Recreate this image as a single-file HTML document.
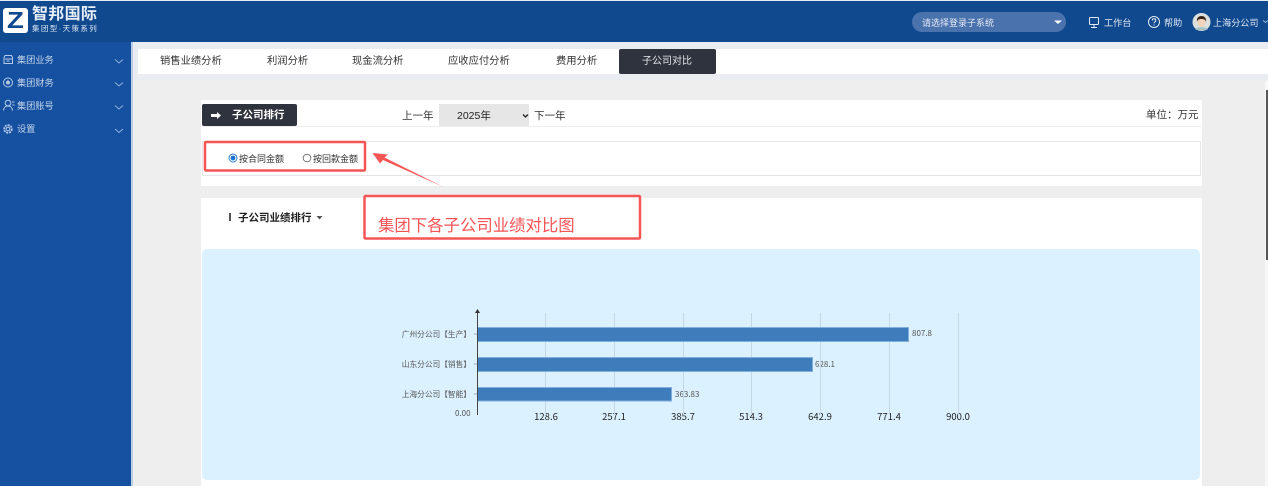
<!DOCTYPE html>
<html lang="zh">
<head>
<meta charset="utf-8">
<title>子公司对比</title>
<style>
html,body{margin:0;padding:0;width:1268px;height:486px;overflow:hidden;background:#eeeeee}
body{position:relative;font-family:"Liberation Sans","Noto Sans CJK SC",sans-serif;color:#333}
div,span{position:absolute;white-space:nowrap}
.t{line-height:14px}
.side{font-size:9.2px;color:#c5d6ec;left:17px;line-height:12px}
.tab{top:55px;font-size:10.3px;line-height:14px;color:#333}
.yl{font-size:7.7px;color:#555;line-height:10px;left:380px;width:91px;text-align:right}
.xl{font-family:"Noto Sans CJK SC",sans-serif;font-size:9.5px;color:#222;line-height:12px;top:410px;width:50px;text-align:center}
.vl{font-family:"Noto Sans CJK SC",sans-serif;font-size:8px;color:#555;line-height:10px}
svg{position:absolute;left:0;top:0}
</style>
</head>
<body>
<!-- top bar -->
<div style="left:0;top:0;width:1268px;height:42px;background:#11498f;border-top:1px solid #e6edf5;box-sizing:border-box"></div>
<!-- sidebar -->
<div style="left:0;top:42px;width:131px;height:444px;background:#1651a1"></div>
<div style="left:131px;top:42px;width:2px;height:444px;background:#b9cde6"></div>
<!-- band -->
<div style="left:133px;top:42px;width:1135px;height:38px;background:#e9ecf0"></div>
<div style="left:138px;top:49px;width:1130px;height:25px;background:#fff"></div>
<!-- logo -->
<div style="left:3px;top:8px;width:25px;height:25px;background:#fff;border-radius:3px"></div>
<div style="left:3px;top:7px;width:25px;height:26px;font:bold 23px/27px 'Liberation Sans',sans-serif;color:#11498f;text-align:center;transform:scaleX(1.2)">Z</div>
<div style="left:32px;top:6px;font-size:16px;font-weight:bold;line-height:18px;color:#e8eef7;letter-spacing:.3px">智邦国际</div>
<div style="left:32px;top:24px;font-size:7.500px;line-height:9px;color:#dbe6f3;letter-spacing:1.4px">集团型·天策系列</div>
<!-- sidebar items -->
<div class="side" style="top:54px">集团业务</div>
<div class="side" style="top:77px">集团财务</div>
<div class="side" style="top:100px">集团账号</div>
<div class="side" style="top:123px">设置</div>
<!-- header right -->
<div style="left:912px;top:12px;width:154px;height:20px;border-radius:10px;background:#4a72ad"></div>
<div class="t" style="left:922px;top:16px;font-size:9px;color:#e4ebf5">请选择登录子系统</div>
<div class="t" style="left:1104px;top:16px;font-size:9.100px;color:#dfe8f3">工作台</div>
<div class="t" style="left:1164px;top:16px;font-size:9.100px;color:#dfe8f3">帮助</div>
<div class="t" style="left:1213px;top:16px;font-size:9.100px;color:#dfe8f3">上海分公司</div>
<!-- tabs -->
<div class="tab" style="left:160px">销售业绩分析</div>
<div class="tab" style="left:267px">利润分析</div>
<div class="tab" style="left:352px">现金流分析</div>
<div class="tab" style="left:448px">应收应付分析</div>
<div class="tab" style="left:556px">费用分析</div>
<div style="left:619px;top:49px;width:97px;height:25px;background:#2f333d;border-radius:2px"></div>
<div class="tab" style="left:642px;color:#e4e6ea;font-size:10px">子公司对比</div>
<!-- panel 1 -->
<div style="left:201px;top:100px;width:1001px;height:86px;background:#fff"></div>
<div style="left:202px;top:126px;width:999px;height:1px;background:#eee"></div>
<div style="left:202px;top:104px;width:95px;height:22px;background:#2f333d;border-radius:2px"></div>
<div class="t" style="left:232px;top:108px;font-size:10.500px;font-weight:bold;color:#fff">子公司排行</div>
<div class="t" style="left:402px;top:109px;font-size:10.500px;color:#333">上一年</div>
<div style="left:439px;top:104px;width:90px;height:22px;background:#e6e6e6"></div>
<div class="t" style="left:457px;top:109px;font-size:10.500px;color:#222">2025年</div>
<div class="t" style="left:534px;top:109px;font-size:10.500px;color:#333">下一年</div>
<div class="t" style="left:1146px;top:108px;font-size:10.500px;color:#333">单位：万元</div>
<div style="left:202px;top:141px;width:999px;height:35px;box-sizing:border-box;border:1px solid #e6e6e6;background:#fff"></div>
<div class="t" style="left:239px;top:152px;font-size:9px;color:#333">按合同金额</div>
<div class="t" style="left:313px;top:152px;font-size:9px;color:#333">按回款金额</div>
<!-- panel 2 -->
<div style="left:201px;top:198px;width:1001px;height:288px;background:#fff"></div>
<div style="left:229px;top:213px;width:2px;height:8px;background:#555"></div>
<div class="t" style="left:238px;top:211px;font-size:10.500px;font-weight:bold;color:#222">子公司业绩排行</div>
<div style="left:202px;top:249px;width:998px;height:231px;background:#dcf1ff;border-radius:5px"></div>
<!-- chart labels -->
<div class="yl" style="top:330px">广州分公司【生产】</div>
<div class="yl" style="top:360px">山东分公司【销售】</div>
<div class="yl" style="top:390px">上海分公司【智能】</div>
<div class="vl" style="left:455px;top:409px">0.00</div>
<div class="vl" style="left:912px;top:329px">807.8</div>
<div class="vl" style="left:815px;top:360px">628.1</div>
<div class="vl" style="left:675px;top:390px">363.83</div>
<div class="xl" style="left:521px">128.6</div>
<div class="xl" style="left:589px">257.1</div>
<div class="xl" style="left:658px">385.7</div>
<div class="xl" style="left:726px">514.3</div>
<div class="xl" style="left:795px">642.9</div>
<div class="xl" style="left:864px">771.4</div>
<div class="xl" style="left:933px">900.0</div>
<!-- scrollbar -->
<div style="left:1265px;top:81px;width:3px;height:405px;background:#f7f7f7"></div>
<div style="left:1266px;top:90px;width:2px;height:170px;background:#555"></div>

<svg width="1268" height="486" viewBox="0 0 1268 486" fill="none">
  <!-- sidebar icons -->
  <g stroke="#b5cae6" stroke-width="1" fill="none">
    <path d="M5 55.500h6.500l1 2v6h-8.500v-6zM5 59h7M6.500 61h3"/>
    <circle cx="8" cy="82.500" r="4.500"/><circle cx="8" cy="82.500" r="1.500" fill="#b5cae6"/>
    <circle cx="8" cy="103" r="2.800"/><path d="M3.500 110.500c.5-3.500 2-4.500 4.500-4.500s4 1 4.500 4.500M12 102h2.500M12.500 105h2"/>
    <circle cx="8" cy="129" r="3.800" stroke-width="1.800" stroke-dasharray="2 .9"/><circle cx="8" cy="129" r="1.800"/>
    <path d="M115 59.500l4 3.500 4-3.500M115 82.500l4 3.500 4-3.500M115 105.500l4 3.500 4-3.500M115 129l4 3.500 4-3.500" stroke="#8fb0da"/>
  </g>
  <!-- header icons -->
  <path d="M1054 20.500h8l-4 3.500z" fill="#fff"/>
  <g stroke="#e4ebf5" stroke-width="1" fill="none">
    <rect x="1089.500" y="17.500" width="9" height="7" rx="1"/><path d="M1094 24.500v3M1091 27.500h6"/>
    <circle cx="1154" cy="22" r="5.500"/><path d="M1152.300 20.500c0-2.300 3.500-2.300 3.500 0 0 1.300-1.800 1.300-1.800 2.800"/>
    <path d="M1263 20.500l2.500 2 2.500-2" stroke="#9db5d6"/>
  </g>
  <circle cx="1154" cy="25" r=".6" fill="#e4ebf5"/>
  <circle cx="1201.500" cy="22" r="9" fill="#dbe0dd"/>
  <ellipse cx="1201.500" cy="22.500" rx="3.700" ry="4.300" fill="#f3d3bb"/>
  <path d="M1197 22c-.5-4 1.500-6 4.500-6s5 2 4.500 6c-.5-2-1.500-3-4.500-3s-4 1-4.500 3z" fill="#3a2418"/>
  <path d="M1195 29c2-2.500 11-2.500 13 0-2 2-11 2-13 0z" fill="#a8c4c4"/>
  <!-- button arrow -->
  <path d="M211 114h6v-2l4 3.500-4 3.500v-2h-6z" fill="#fff"/>
  <!-- select chevron -->
  <path d="M523 114.500l2.500 2.500 2.500-2.500" stroke="#222" stroke-width="1.300"/>
  <!-- radios -->
  <circle cx="233" cy="158" r="4" fill="#fff" stroke="#2f7fd6"/>
  <circle cx="233" cy="158" r="2.400" fill="#1a73d8"/>
  <circle cx="307" cy="158" r="3.800" fill="#fff" stroke="#777"/>
  <!-- title caret -->
  <path d="M316.500 216h6l-3 3.500z" fill="#555"/>
  <!-- gridlines -->
  <g stroke="#c5d6e6" stroke-width="1">
    <path d="M545.500 313v102M614.500 313v102M683.500 313v102M751.500 313v102M820.500 313v102M889.500 313v102M958.500 313v102"/>
  </g>
  <!-- bars -->
  <g fill="#3e7cbc" stroke="#7fb0dc" stroke-width="1">
    <rect x="477.500" y="327.500" width="431" height="14"/>
    <rect x="477.500" y="357.500" width="335" height="14"/>
    <rect x="477.500" y="387.500" width="194" height="13.500"/>
  </g>
  <!-- axis -->
  <path d="M477.500 312v103" stroke="#444" stroke-width="1"/>
  <path d="M477.500 309l-2.500 4h5z" fill="#333"/>
  <path d="M474 334h3M474 364h3M474 394h3" stroke="#9aa" stroke-width="1"/>
  <!-- annotations -->
  <rect x="205" y="142" width="160" height="28.500" rx="1" stroke="#f55555" stroke-width="2.500"/>
  <rect x="364.500" y="196" width="275.500" height="42.500" rx="1" fill="#fff" stroke="#f55555" stroke-width="2.500"/>
  <path d="M372.500 153l15.500 1.500-3.500 3 59 29.500-60.500-27-3 3.500z" fill="#f55555"/>
</svg>
<div style="left:378px;top:216px;font-size:16.400px;line-height:20px;color:#f55555">集团下各子公司业绩对比图</div>
</body>
</html>
